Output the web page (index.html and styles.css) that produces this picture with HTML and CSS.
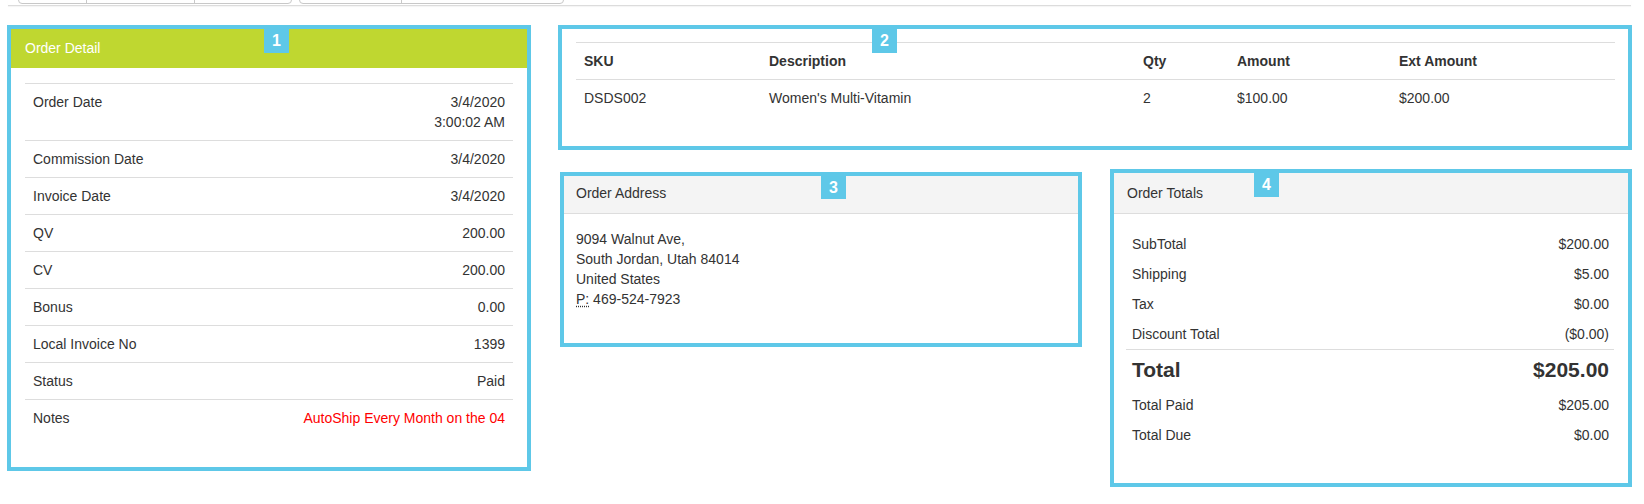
FILE: index.html
```html
<!DOCTYPE html>
<html lang="en">
<head>
<meta charset="utf-8">
<title>Order Detail</title>
<link rel="stylesheet" href="styles.css">
</head>
<body>
<div class="topnav">
  <div class="btn-group">
    <span class="btn w67"></span><span class="btn w108"></span><span class="btn w98"></span>
  </div>
  <div class="btn-group">
    <span class="btn w101"></span><span class="btn w163"></span>
  </div>
</div>

<div class="page">
  <section class="hl box-detail">
    <span class="badge badge-1">1</span>
    <div class="detail-head">Order Detail</div>
    <div class="detail-body">
      <table class="kv">
        <tr><td>Order Date</td><td class="val">3/4/2020<br>3:00:02 AM</td></tr>
        <tr><td>Commission Date</td><td class="val">3/4/2020</td></tr>
        <tr><td>Invoice Date</td><td class="val">3/4/2020</td></tr>
        <tr><td>QV</td><td class="val">200.00</td></tr>
        <tr><td>CV</td><td class="val">200.00</td></tr>
        <tr><td>Bonus</td><td class="val">0.00</td></tr>
        <tr><td>Local Invoice No</td><td class="val">1399</td></tr>
        <tr><td>Status</td><td class="val">Paid</td></tr>
        <tr><td>Notes</td><td class="val note">AutoShip Every Month on the 04</td></tr>
      </table>
    </div>
  </section>

  <div class="right">
    <section class="hl box-items">
      <span class="badge badge-2">2</span>
      <table class="items">
        <colgroup>
          <col class="c-sku"><col class="c-desc"><col class="c-qty"><col class="c-amt"><col class="c-ext">
        </colgroup>
        <thead>
          <tr><th>SKU</th><th>Description</th><th>Qty</th><th>Amount</th><th>Ext Amount</th></tr>
        </thead>
        <tbody>
          <tr><td>DSDS002</td><td>Women's Multi-Vitamin</td><td>2</td><td>$100.00</td><td>$200.00</td></tr>
        </tbody>
      </table>
    </section>

    <div class="lower">
      <section class="hl box-address">
        <span class="badge badge-3">3</span>
        <div class="panel-head head-address">Order Address</div>
        <div class="address-body">
          <address class="addr">
            9094 Walnut Ave,<br>
            South Jordan, Utah 84014<br>
            United States<br>
            <abbr class="phone" title="Phone">P:</abbr> 469-524-7923
          </address>
        </div>
      </section>

      <section class="hl box-totals">
        <span class="badge badge-4">4</span>
        <div class="panel-head head-totals">Order Totals</div>
        <div class="totals-body">
          <table class="totals">
            <tr><td>SubTotal</td><td class="val">$200.00</td></tr>
            <tr><td>Shipping</td><td class="val">$5.00</td></tr>
            <tr><td>Tax</td><td class="val">$0.00</td></tr>
            <tr><td>Discount Total</td><td class="val">($0.00)</td></tr>
            <tr class="grand"><td>Total</td><td class="val">$205.00</td></tr>
            <tr><td>Total Paid</td><td class="val">$205.00</td></tr>
            <tr><td>Total Due</td><td class="val">$0.00</td></tr>
          </table>
        </div>
      </section>
    </div>
  </div>
</div>
</body>
</html>
```

FILE: styles.css
```css
* { box-sizing: border-box; }

html, body {
  margin: 0;
  padding: 0;
  background: #fff;
}

body {
  font-family: "Liberation Sans", Arial, Helvetica, sans-serif;
  font-size: 14px;
  line-height: 20px;
  color: #333;
  width: 1644px;
  height: 504px;
  overflow: hidden;
}

/* top strip of cut-off button groups */
.topnav {
  display: flex;
  align-items: flex-end;
  gap: 7px;
  height: 6px;
  margin: 0 13px 0 8px;
  padding-left: 10px;
  border-bottom: 1px solid #dcdcdc;
  box-shadow: 0 1px 1px rgba(0, 0, 0, 0.04);
  overflow: hidden;
}

.btn-group {
  display: flex;
  flex-shrink: 0;
  height: 30px;
  margin-bottom: 1px;
  border: 1px solid #c8c8c8;
  border-radius: 4px;
  background: #fff;
}

.btn { display: block; height: 100%; border-left: 1px solid #c8c8c8; }
.btn:first-child { border-left: 0; }
.w67 { width: 67px; }
.w108 { width: 108px; }
.w98 { width: 97px; }
.w101 { width: 101px; }
.w163 { width: 162px; }

/* page layout */
.page {
  display: flex;
  align-items: flex-start;
  gap: 27px;
  margin-top: 19px;
  padding-left: 7px;
}

.hl {
  position: relative;
  border: 4px solid #5ec8e8;
  background: #fff;
}

.badge {
  position: absolute;
  top: 0;
  width: 25px;
  height: 24px;
  background: #5ec8e8;
  color: #fff;
  font-weight: bold;
  font-size: 16px;
  line-height: 24px;
  text-align: center;
}

/* box 1 */
.box-detail { width: 524px; }
.badge-1 { left: 253px; }

.detail-head {
  height: 39px;
  padding: 9px 14px 10px;
  background: #bfd730;
  color: #fff;
  font-size: 14px;
  line-height: 20px;
}

.detail-body { padding: 15px 14px 31px; }

.kv, .items, .totals {
  width: 100%;
  border-collapse: separate;
  border-spacing: 0;
}

.kv td {
  padding: 8px;
  border-top: 1px solid #ddd;
  vertical-align: top;
}

.val { text-align: right; }
.note { color: #ff0000; }

/* right column */
.right {
  display: flex;
  flex-direction: column;
  gap: 19px;
  width: 1074px;
}

.box-items {
  width: 1074px;
  padding: 13px 13px 30px 14px;
}
.badge-2 { left: 310px; }

.items { table-layout: fixed; }
.c-sku { width: 185px; }
.c-desc { width: 374px; }
.c-qty { width: 94px; }
.c-amt { width: 162px; }
.c-ext { width: 224px; }

.items th {
  padding: 8px;
  text-align: left;
  font-weight: bold;
  border-top: 1px solid #ddd;
  border-bottom: 1px solid #ddd;
}

.items td { padding: 8px; }

.lower {
  display: flex;
  align-items: flex-start;
  gap: 28px;
  padding-left: 2px;
}

.panel-head {
  background: #f4f4f4;
  border-bottom: 1px solid #ddd;
}

/* box 3 */
.box-address {
  width: 522px;
  margin-top: 3px;
}
.badge-3 { left: 257px; height: 23px; line-height: 23px; }

.head-address { padding: 7px 12px 10px; }

.address-body { padding: 15px 12px 14px; }

.addr {
  margin: 0 0 20px;
  font-style: normal;
}

.phone {
  text-decoration: underline dotted;
  text-underline-offset: 2px;
  cursor: help;
}

/* box 4 */
.box-totals { width: 522px; }
.badge-4 { left: 140px; }

.head-totals { padding: 10px 13px; }

.totals-body { padding: 15px 14px 33px 12px; }

.totals td { padding: 5px 5px 5px 6px; }

.totals .grand td {
  border-top: 1px solid #ddd;
  font-size: 21px;
  font-weight: bold;
  line-height: 30px;
}
```
